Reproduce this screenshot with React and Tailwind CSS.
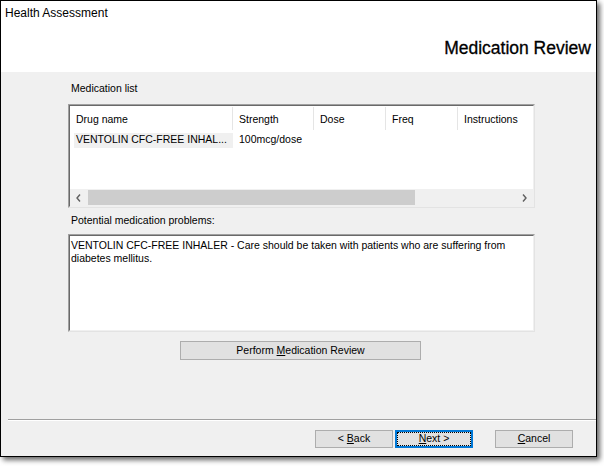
import React from "react";

const font = { fontFamily: '"Liberation Sans", Arial, sans-serif' };

function Sunken({ className = "", children }) {
  // classic Fixed3D sunken edge: grey outer line, darker inner line
  return (
    <div className={`border border-[#a0a0a0] border-r-[#e3e3e3] border-b-[#e3e3e3] ${className}`}>
      <div className="h-full w-full border border-[#696969] border-r-[#f0f0f0] border-b-[#f0f0f0] bg-white">
        {children}
      </div>
    </div>
  );
}

function Btn({ children, className = "", focused = false }) {
  return (
    <button
      className={`flex items-center justify-center bg-[#e1e1e1] text-[10.5px] text-black ${
        focused ? "border border-[#0078d7] shadow-[inset_0_0_0_1px_#0078d7]" : "border border-[#adadad]"
      } ${className}`}
    >
      {focused ? (
        <span className="flex h-full w-full items-center justify-center p-[1px]">
          <span className="flex h-full w-full items-center justify-center border border-dotted border-black">
            {children}
          </span>
        </span>
      ) : (
        children
      )}
    </button>
  );
}

const cols = [
  { name: "Drug name", w: "w-[163px]" },
  { name: "Strength", w: "w-[81px]" },
  { name: "Dose", w: "w-[72px]" },
  { name: "Freq", w: "w-[72px]" },
  { name: "Instructions", w: "flex-1" },
];

export default function App() {
  return (
    <div className="h-[466px] w-[604px] bg-white" style={font}>
      <div className="flex h-[457px] w-[597px] flex-col border border-black bg-[#f0f0f0] shadow-[3px_3px_5px_rgba(0,0,0,0.6)]">
        {/* wizard header */}
        <div className="flex h-[71px] flex-col justify-between bg-white">
          <div className="pl-[4px] pt-[5px] text-[12px] leading-[14px] text-black">Health Assessment</div>
          <div className="pb-[14px] pr-[5px] text-right text-[17.5px] leading-[20px] text-black [-webkit-text-stroke:0.3px_black]">
            Medication Review
          </div>
        </div>

        {/* page body */}
        <div className="flex flex-col pl-[67px] text-[10.5px]">
          <div className="mt-[10px] pl-[3px] leading-[13px] text-black">Medication list</div>

          <Sunken className="mt-[9px] h-[104px] w-[467px]">
            <div className="flex h-full flex-col">
              <div className="flex h-[25px] items-center text-black">
                {cols.map((c, i) => (
                  <div key={c.name} className={`flex h-[23px] items-center ${c.w} ${i < 4 ? "border-r border-[#e5e5e5]" : ""}`}>
                    <span className="pl-[6px] pt-[2px]">{c.name}</span>
                  </div>
                ))}
              </div>
              <div className="mt-[1px] flex h-[16px] items-center whitespace-nowrap text-black">
                <div className="w-[163px] pl-[4px]">
                  <div className="flex h-[15px] items-center bg-[#f0f0f0] pl-[2px]">VENTOLIN CFC-FREE INHAL...</div>
                </div>
                <div className="pl-[6px]">100mcg/dose</div>
              </div>
              <div className="flex-1" />
              <div className="flex h-[17px] items-center bg-[#f0f0f0]">
                <div className="flex w-[17px] items-center justify-center">
                  <svg width="5" height="8" viewBox="0 0 5 8">
                    <path d="M4 0.5 L1 4 L4 7.5" fill="none" stroke="#606060" strokeWidth="1.4" />
                  </svg>
                </div>
                <div className="ml-[1px] h-[15px] w-[327px] bg-[#cdcdcd]" />
                <div className="flex-1" />
                <div className="flex w-[17px] items-center justify-center">
                  <svg width="5" height="8" viewBox="0 0 5 8">
                    <path d="M1 0.5 L4 4 L1 7.5" fill="none" stroke="#606060" strokeWidth="1.4" />
                  </svg>
                </div>
              </div>
            </div>
          </Sunken>

          <div className="mt-[6px] pl-[3px] leading-[13px] text-black">Potential medication problems:</div>

          <Sunken className="mt-[7px] h-[98px] w-[467px]">
            <div className="pl-[1px] pt-[3px] leading-[13px] text-black">
              VENTOLIN CFC-FREE INHALER - Care should be taken with patients who are suffering from diabetes mellitus.
            </div>
          </Sunken>

          <Btn className="ml-[112px] mt-[9px] h-[19px] w-[241px]">
            <span>
              Perform <span className="underline">M</span>edication Review
            </span>
          </Btn>
        </div>

        {/* wizard footer */}
        <div className="mt-auto flex flex-col pb-[8px]">
          <div className="ml-[7px] h-[2px] border-t border-[#a0a0a0] border-b border-b-white" />
          <div className="mt-[9px] flex justify-end pr-[23px]">
            <Btn className="h-[18px] w-[78px]">
              <span>
                &lt; <span className="underline">B</span>ack
              </span>
            </Btn>
            <Btn focused className="ml-[2px] h-[18px] w-[78px]">
              <span>
                <span className="underline">N</span>ext &gt;
              </span>
            </Btn>
            <Btn className="ml-[22px] h-[18px] w-[78px]">
              <span>
                <span className="underline">C</span>ancel
              </span>
            </Btn>
          </div>
        </div>
      </div>
    </div>
  );
}
